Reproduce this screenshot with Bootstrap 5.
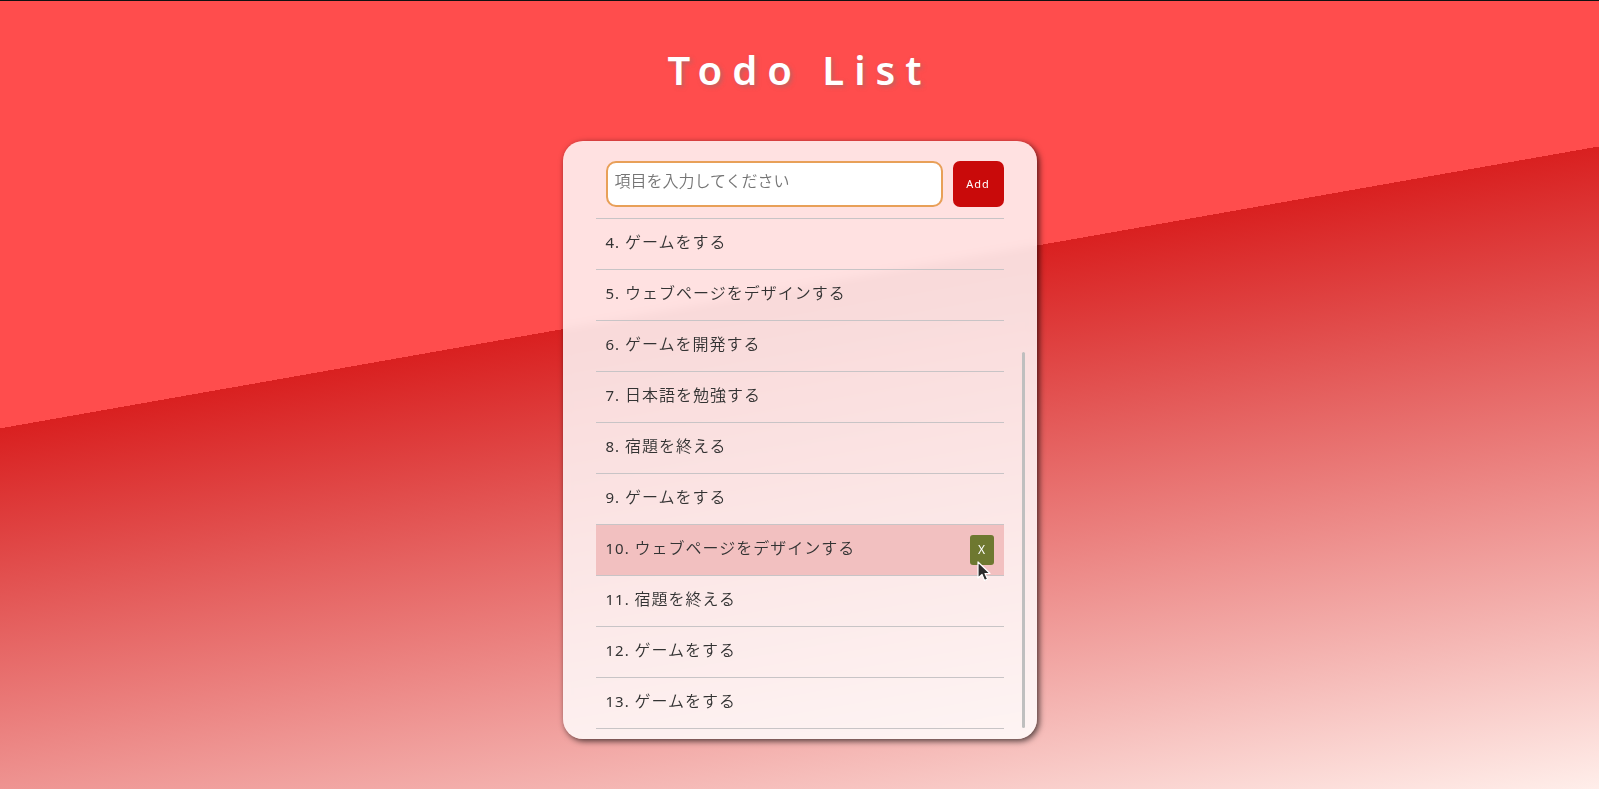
<!DOCTYPE html>
<html lang="ja">
<head>
<meta charset="utf-8">
<meta name="viewport" content="width=device-width, initial-scale=1">
<title>Todo List</title>
<link href="https://cdn.jsdelivr.net/npm/bootstrap@5.3.0/dist/css/bootstrap.min.css" rel="stylesheet">
<style>
  body {
    font-family: "Noto Sans", "Noto Sans CJK JP", sans-serif;
    color: #333;
    background: linear-gradient(170deg, #ff4d4d 40%, #d92020 40%, #ffeeea 100%) no-repeat;
    border-top: 1px solid #111;
  }
  .page-title {
    font-size: 40px;
    line-height: 56px;
    font-weight: 600;
    letter-spacing: 10px;
    margin: 41px 0 43px;
    text-shadow: 2px 2px 4px rgba(120, 120, 120, .5);
  }
  .todo-panel {
    width: 100%;
    max-width: 474px;
    padding: 20px 33px 10px;
    border-radius: 20px;
    background: rgba(255, 255, 255, .83);
    backdrop-filter: blur(5px);
    box-shadow: 2px 2px 6px rgba(0, 0, 0, .7);
  }
  .todo-form { gap: 10px; padding-left: 10px; margin-bottom: 11px; }
  .todo-input {
    height: 46px;
    padding: 0 7px 6px;
    font-size: 16px;
    border: 2px solid #e8a058;
    border-radius: 10px;
  }
  .todo-input:focus { border-color: #e8a058; box-shadow: none; }
  .todo-input::placeholder { color: #757575; font-weight: 350; }
  .add-btn {
    width: 51px;
    padding: 0;
    font-size: 11px;
    letter-spacing: 1px;
    color: #fff;
    background: #c90a0a;
    border: 0;
    border-radius: 7px;
  }
  .todo-list { border-top: 1px solid #c8c4c6; }
  .todo-item {
    height: 51px;
    padding: 0 10px;
    font-size: 15px;
    letter-spacing: 1px;
    border-bottom: 1px solid #c8c4c6;
  }
  .todo-text { line-height: 24px; margin-bottom: 4px; }
  .todo-name { font-size: 16px; font-weight: 350; }
  .todo-item.hovered { background: #f2c0c0; }
  .del-btn {
    width: 24px;
    height: 30px;
    padding: 0;
    font-size: 12px;
    line-height: 28px;
    color: #fff;
    background: #6e7830;
    border: 0;
    border-radius: 3px;
  }
  .scroll-thumb {
    right: 12px;
    bottom: 11px;
    width: 3px;
    height: 376px;
    border-radius: 2px;
    background: #bfbfbf;
  }
  .cursor { left: 7px; top: 25px; pointer-events: none; }
</style>
</head>
<body class="min-vh-100 d-flex flex-column align-items-center">
  <h1 class="page-title text-white text-center">Todo List</h1>
  <main class="todo-panel position-relative">
    <form class="todo-form d-flex">
      <input class="todo-input form-control" type="text" aria-label="項目" placeholder="項目を入力してください">
      <button class="add-btn btn flex-shrink-0" type="button">Add</button>
    </form>
    <ul class="todo-list list-unstyled mb-0">
      <li class="todo-item d-flex align-items-center"><div class="todo-text">4. <span class="todo-name">ゲームをする</span></div></li>
      <li class="todo-item d-flex align-items-center"><div class="todo-text">5. <span class="todo-name">ウェブページをデザインする</span></div></li>
      <li class="todo-item d-flex align-items-center"><div class="todo-text">6. <span class="todo-name">ゲームを開発する</span></div></li>
      <li class="todo-item d-flex align-items-center"><div class="todo-text">7. <span class="todo-name">日本語を勉強する</span></div></li>
      <li class="todo-item d-flex align-items-center"><div class="todo-text">8. <span class="todo-name">宿題を終える</span></div></li>
      <li class="todo-item d-flex align-items-center"><div class="todo-text">9. <span class="todo-name">ゲームをする</span></div></li>
      <li class="todo-item hovered d-flex align-items-center justify-content-between">
        <div class="todo-text">10. <span class="todo-name">ウェブページをデザインする</span></div>
        <div class="position-relative d-flex">
          <button class="del-btn btn" type="button">X</button>
          <svg class="cursor position-absolute" width="14" height="22" viewBox="0 0 14 22" aria-hidden="true">
            <path d="M1 2V18L5 14.500L7.500 20.500L10.500 19L8 13.500H13Z" fill="#2b2b2b" stroke="#fff" stroke-width="1.200" stroke-linejoin="round"/>
          </svg>
        </div>
      </li>
      <li class="todo-item d-flex align-items-center"><div class="todo-text">11. <span class="todo-name">宿題を終える</span></div></li>
      <li class="todo-item d-flex align-items-center"><div class="todo-text">12. <span class="todo-name">ゲームをする</span></div></li>
      <li class="todo-item d-flex align-items-center"><div class="todo-text">13. <span class="todo-name">ゲームをする</span></div></li>
    </ul>
    <div class="scroll-thumb position-absolute"></div>
  </main>
<script src="https://cdn.jsdelivr.net/npm/bootstrap@5.3.0/dist/js/bootstrap.bundle.min.js"></script>
</body>
</html>
